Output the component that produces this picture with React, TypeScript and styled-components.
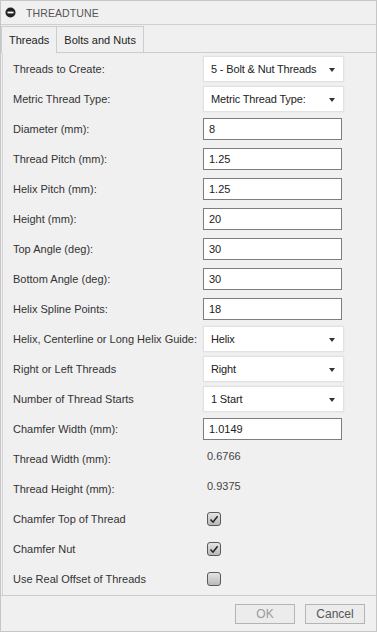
import React from "react";
import styled, { createGlobalStyle } from "styled-components";

const GlobalStyle = createGlobalStyle`
  html, body {
    margin: 0;
    padding: 0;
    background: #f0f0f0;
  }
  * {
    box-sizing: border-box;
  }
`;

const Dialog = styled.div`
  width: 377px;
  height: 632px;
  display: flex;
  flex-direction: column;
  background: #f0f0f0;
  border: 1px solid #c6c6c6;
  font-family: "Liberation Sans", Arial, sans-serif;
  font-size: 11px;
  color: #333;
  overflow: hidden;
`;

const TitleBar = styled.div`
  height: 24px;
  flex: none;
  display: flex;
  align-items: center;
  gap: 10px;
  padding-left: 4px;
  border-bottom: 1px solid #cfcfcf;
`;

const TitleText = styled.span`
  font-size: 10.5px;
  color: #555;
  letter-spacing: 0.1px;
`;

const TabBar = styled.div`
  height: 28px;
  flex: none;
  display: flex;
  align-items: flex-end;
  border-bottom: 1px solid #cdcdcd;
`;

const Tab = styled.div<{ $active?: boolean }>`
  display: flex;
  align-items: center;
  padding: 0 7px;
  border: 1px solid #cdcdcd;
  border-left: ${(p) => (p.$active ? "1px solid #cdcdcd" : "none")};
  border-bottom: none;
  margin-bottom: ${(p) => (p.$active ? "-1px" : "0")};
  height: ${(p) => (p.$active ? "27px" : "26px")};
  padding-bottom: ${(p) => (p.$active ? "1px" : "0")};
  background: #f0f0f0;
  color: #222;
  font-size: 11px;
`;

const Panel = styled.div`
  flex: 1;
  padding-top: 1px;
  border-left: 1px solid #d4d4d4;
  margin-left: 1px;
`;

const Row = styled.div`
  height: 30px;
  display: grid;
  grid-template-columns: 190px 1fr;
  align-items: center;
  padding-left: 10px;
`;

const Label = styled.span`
  color: #333;
`;

const Select = styled.div`
  width: 141px;
  height: 26px;
  display: flex;
  align-items: center;
  justify-content: space-between;
  padding: 0 8px 0 7px;
  background: #fff;
  border: 1px solid #e2e2e2;
  box-shadow: 0 0 1px rgba(0, 0, 0, 0.12);
  color: #222;
  letter-spacing: -0.15px;
`;

const Arrow = styled.span`
  flex: none;
  width: 0;
  height: 0;
  border-left: 3.5px solid transparent;
  border-right: 3.5px solid transparent;
  border-top: 4px solid #333;
  margin-top: 1px;
`;

const Input = styled.div`
  width: 139px;
  height: 22px;
  display: flex;
  align-items: center;
  padding-left: 5px;
  background: #fff;
  border: 1px solid #7d7d7d;
  color: #222;
`;

const Value = styled.div`
  padding-left: 4px;
  padding-bottom: 6px;
  color: #444;
`;

const Check = styled.span`
  width: 14px;
  height: 14px;
  margin-left: 4px;
  display: flex;
  align-items: center;
  justify-content: center;
  border: 1px solid #5a5a5a;
  border-radius: 3px;
  background: linear-gradient(#e4e4e4, #b9b9b9);
`;

const Footer = styled.div`
  flex: none;
  height: 36px;
  display: flex;
  justify-content: flex-end;
  align-items: center;
  gap: 10px;
  padding: 0 11px 0 0;
  border-top: 1px solid #cdcdcd;
`;

const Button = styled.div<{ $disabled?: boolean }>`
  width: 60px;
  height: 20px;
  display: flex;
  align-items: center;
  justify-content: center;
  background: #ececec;
  border: 1px solid #b4b4b4;
  font-size: 12px;
  color: ${(p) => (p.$disabled ? "#9a9a9a" : "#555")};
`;

const MinusIcon = () => (
  <svg width="11" height="11" viewBox="0 0 11 11">
    <circle cx="5.5" cy="5.5" r="5" fill="#222" />
    <rect x="2.5" y="4.6" width="6" height="1.8" fill="#fff" />
  </svg>
);

const Checkbox = ({ checked }: { checked?: boolean }) => (
  <Check>
    {checked && (
      <svg width="10" height="9" viewBox="0 0 10 9">
        <path d="M1.5 4.5 L4 7.2 L8.6 1.2" stroke="#222" strokeWidth="1.5" fill="none" />
      </svg>
    )}
  </Check>
);

type Field =
  | { label: string; kind: "select"; value: string }
  | { label: string; kind: "input"; value: string }
  | { label: string; kind: "value"; value: string }
  | { label: string; kind: "check"; checked: boolean };

const fields: Field[] = [
  { label: "Threads to Create:", kind: "select", value: "5 - Bolt & Nut Threads" },
  { label: "Metric Thread Type:", kind: "select", value: "Metric Thread Type:" },
  { label: "Diameter (mm):", kind: "input", value: "8" },
  { label: "Thread Pitch (mm):", kind: "input", value: "1.25" },
  { label: "Helix Pitch (mm):", kind: "input", value: "1.25" },
  { label: "Height (mm):", kind: "input", value: "20" },
  { label: "Top Angle (deg):", kind: "input", value: "30" },
  { label: "Bottom Angle (deg):", kind: "input", value: "30" },
  { label: "Helix Spline Points:", kind: "input", value: "18" },
  { label: "Helix, Centerline or Long Helix Guide:", kind: "select", value: "Helix" },
  { label: "Right or Left Threads", kind: "select", value: "Right" },
  { label: "Number of Thread Starts", kind: "select", value: "1 Start" },
  { label: "Chamfer Width (mm):", kind: "input", value: "1.0149" },
  { label: "Thread Width (mm):", kind: "value", value: "0.6766" },
  { label: "Thread Height (mm):", kind: "value", value: "0.9375" },
  { label: "Chamfer Top of Thread", kind: "check", checked: true },
  { label: "Chamfer Nut", kind: "check", checked: true },
  { label: "Use Real Offset of Threads", kind: "check", checked: false },
];

const renderControl = (f: Field) => {
  switch (f.kind) {
    case "select":
      return (
        <Select>
          <span>{f.value}</span>
          <Arrow />
        </Select>
      );
    case "input":
      return <Input>{f.value}</Input>;
    case "value":
      return <Value>{f.value}</Value>;
    case "check":
      return <Checkbox checked={f.checked} />;
  }
};

const App = () => {
  return (
    <>
      <GlobalStyle />
      <Dialog>
        <TitleBar>
          <MinusIcon />
          <TitleText>THREADTUNE</TitleText>
        </TitleBar>
        <TabBar>
          <Tab $active>Threads</Tab>
          <Tab>Bolts and Nuts</Tab>
        </TabBar>
        <Panel>
          {fields.map((f) => (
            <Row key={f.label}>
              <Label>{f.label}</Label>
              <div>{renderControl(f)}</div>
            </Row>
          ))}
        </Panel>
        <Footer>
          <Button $disabled>OK</Button>
          <Button>Cancel</Button>
        </Footer>
      </Dialog>
    </>
  );
};

export default App;
